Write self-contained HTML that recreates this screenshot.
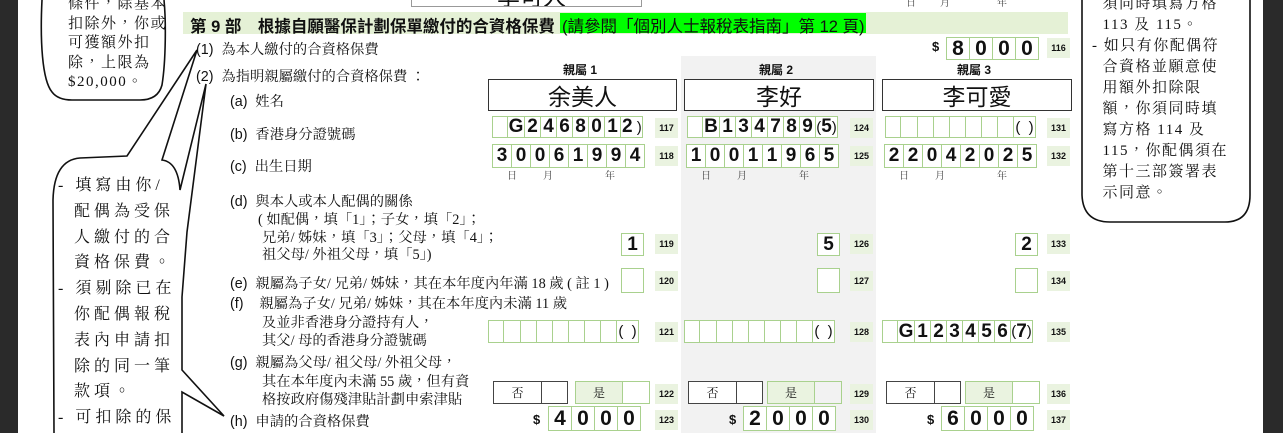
<!DOCTYPE html>
<html><head><meta charset="utf-8"><style>
*{margin:0;padding:0;box-sizing:border-box}
html,body{width:1283px;height:433px;overflow:hidden}
body{background:#fff;position:relative;font-family:"Liberation Sans","Noto Sans CJK TC",sans-serif;color:#111}
.a{position:absolute;white-space:nowrap}
.s{font-family:"Liberation Serif","Noto Serif CJK TC",serif}
.lab{font-size:14.3px}
.row{position:absolute;display:flex;height:23px}
.c{border:1px solid #a9d18e;margin-right:-1px;height:100%;display:flex;align-items:center;justify-content:center;font-weight:bold;font-size:19px;background:#fff}
.n{position:absolute;width:23px;height:20px;background:#eaf3e0;font-size:9px;font-weight:bold;display:flex;align-items:center;justify-content:center}
.nm{position:absolute;height:32px;border:1.5px solid #333;background:#fff;font-size:23px;display:flex;align-items:center;justify-content:center;font-family:"Liberation Sans","Noto Sans CJK TC",sans-serif}
.hd{position:absolute;font-size:12px;font-weight:bold}
.dm{position:absolute;font-size:10px;color:#444;font-family:"Liberation Serif","Noto Serif CJK TC",serif}
.yn{position:absolute;height:23px;display:flex;font-size:12px;font-family:"Liberation Serif","Noto Serif CJK TC",serif}
.yn div{height:100%;display:flex;align-items:center;justify-content:center}
.cb{font-family:"Liberation Serif","Noto Serif CJK TC",serif;font-size:15px;line-height:1}
.clip{position:absolute;left:0;top:0;width:1283px;height:433px;overflow:hidden}
</style></head><body>
<div class="clip">
<div class="a" style="left:0;top:0;width:18px;height:433px;background:#2a2a2a"></div>
<div class="a" style="left:1263px;top:0;width:20px;height:433px;background:#2a2a2a"></div>
<div class="a" style="left:681px;top:56px;width:195px;height:377px;background:#f2f2f2"></div>

<div class="a" style="left:411px;top:0;width:231px;height:7px;border:1.5px solid #999;border-top:none;background:#fff;overflow:hidden"><span style="position:absolute;left:85px;top:-22px;font-size:23px">李可人</span></div>
<div class="a" style="left:0;top:0;width:1283px;height:10px;overflow:hidden">
<div class="dm" style="left:906px;top:-6px">日</div><div class="dm" style="left:940px;top:-6px">月</div><div class="dm" style="left:997px;top:-6px">年</div>
</div>

<div class="a" style="left:183px;top:12px;width:885px;height:22px;background:#e5f1d6"></div>
<div class="a" style="left:190px;top:13px;font-size:16.5px;font-weight:bold">第 9 部　根據自願醫保計劃保單繳付的合資格保費</div>
<div class="a" style="left:560px;top:13px;width:306px;height:20px;background:#00ff00"></div>
<div class="a" style="left:562px;top:13px;font-size:16.5px">(請參閱「個別人士報稅表指南」第 12 頁)</div>

<div class="a lab" style="left:196px;top:39px">(1)&nbsp;&nbsp;<span class="s">為本人繳付的合資格保費</span></div>
<div class="a lab" style="left:196px;top:66px">(2)&nbsp;&nbsp;<span class="s">為指明親屬繳付的合資格保費 ：</span></div>
<div class="a lab" style="left:230px;top:91px">(a)&nbsp;&nbsp;<span class="s">姓名</span></div>
<div class="a lab" style="left:230px;top:124px">(b)&nbsp;&nbsp;<span class="s">香港身分證號碼</span></div>
<div class="a lab" style="left:230px;top:156px">(c)&nbsp;&nbsp;<span class="s">出生日期</span></div>
<div class="a lab" style="left:230px;top:191px">(d)&nbsp;&nbsp;<span class="s">與本人或本人配偶的關係</span></div>
<div class="a lab s" style="left:258px;top:209px">( 如配偶，填「1」；子女，填「2」；</div>
<div class="a lab s" style="left:262px;top:227px">兄弟/ 姊妹，填「3」；父母，填「4」；</div>
<div class="a lab s" style="left:262px;top:244px">祖父母/ 外祖父母，填「5」)</div>
<div class="a lab" style="left:230px;top:273px">(e)&nbsp;&nbsp;<span class="s">親屬為子女/ 兄弟/ 姊妹，其在本年度內年滿 18 歲 ( 註 1 )</span></div>
<div class="a lab" style="left:230px;top:293px">(f)&nbsp;&nbsp;&nbsp;&nbsp;<span class="s">親屬為子女/ 兄弟/ 姊妹，其在本年度內未滿 11 歲</span></div>
<div class="a lab s" style="left:262px;top:312px">及並非香港身分證持有人，</div>
<div class="a lab s" style="left:262px;top:330px">其父/ 母的香港身分證號碼</div>
<div class="a lab" style="left:230px;top:352px">(g)&nbsp;&nbsp;<span class="s">親屬為父母/ 祖父母/ 外祖父母，</span></div>
<div class="a lab s" style="left:262px;top:371px">其在本年度內未滿 55 歲，但有資</div>
<div class="a lab s" style="left:262px;top:389px">格按政府傷殘津貼計劃申索津貼</div>
<div class="a lab" style="left:230px;top:411px">(h)&nbsp;&nbsp;<span class="s">申請的合資格保費</span></div>

<div class="a" style="left:932px;top:39px;font-size:13px;font-weight:bold">$</div>
<div class="row" style="left:946px;top:37px"><div class="c" style="width:24px;font-size:21px">8</div><div class="c" style="width:24px;font-size:21px">0</div><div class="c" style="width:24px;font-size:21px">0</div><div class="c" style="width:24px;font-size:21px">0</div></div>
<div class="n" style="left:1047px;top:38px">116</div>

<div class="hd" style="left:563px;top:61px">親屬 1</div>
<div class="hd" style="left:759px;top:61px">親屬 2</div>
<div class="hd" style="left:957px;top:61px">親屬 3</div>
<div class="nm" style="left:488px;top:79px;width:189px">余美人</div>
<div class="nm" style="left:684px;top:79px;width:190px">李好</div>
<div class="nm" style="left:882px;top:79px;width:190px">李可愛</div>

<div class="row" style="left:492px;top:116px;height:22px"><div class="c" style="width:16px"></div><div class="c" style="width:18px">G</div><div class="c" style="width:17px">2</div><div class="c" style="width:17px">4</div><div class="c" style="width:17px">6</div><div class="c" style="width:17px">8</div><div class="c" style="width:17px">0</div><div class="c" style="width:17px">1</div><div class="c" style="width:23px;justify-content:flex-start;padding-left:1px">2<span style="font-weight:normal;font-size:15px">&nbsp;)</span></div></div>
<div class="n" style="left:655px;top:118px">117</div>
<div class="row" style="left:687px;top:116px;height:22px"><div class="c" style="width:16px"></div><div class="c" style="width:18px">B</div><div class="c" style="width:17px">1</div><div class="c" style="width:17px">3</div><div class="c" style="width:17px">4</div><div class="c" style="width:17px">7</div><div class="c" style="width:17px">8</div><div class="c" style="width:17px">9</div><div class="c" style="width:23px"><span style="font-weight:normal;font-size:15px">(</span>5<span style="font-weight:normal;font-size:15px">)</span></div></div>
<div class="n" style="left:850px;top:118px">124</div>
<div class="row" style="left:885px;top:116px;height:22px"><div class="c" style="width:16px"></div><div class="c" style="width:18px"></div><div class="c" style="width:17px"></div><div class="c" style="width:17px"></div><div class="c" style="width:17px"></div><div class="c" style="width:17px"></div><div class="c" style="width:17px"></div><div class="c" style="width:17px"></div><div class="c" style="width:23px;font-weight:normal;font-size:15px">(&nbsp;&nbsp;)</div></div>
<div class="n" style="left:1047px;top:118px">131</div>

<div class="row" style="left:492px;top:144px;height:24px"><div class="c" style="width:20px">3</div><div class="c" style="width:20px">0</div><div class="c" style="width:20px">0</div><div class="c" style="width:20px">6</div><div class="c" style="width:20px">1</div><div class="c" style="width:20px">9</div><div class="c" style="width:20px">9</div><div class="c" style="width:20px">4</div></div>
<div class="n" style="left:655px;top:146px">118</div>
<div class="row" style="left:686px;top:144px;height:24px"><div class="c" style="width:20px">1</div><div class="c" style="width:20px">0</div><div class="c" style="width:20px">0</div><div class="c" style="width:20px">1</div><div class="c" style="width:20px">1</div><div class="c" style="width:20px">9</div><div class="c" style="width:20px">6</div><div class="c" style="width:20px">5</div></div>
<div class="n" style="left:850px;top:146px">125</div>
<div class="row" style="left:884px;top:144px;height:24px"><div class="c" style="width:20px">2</div><div class="c" style="width:20px">2</div><div class="c" style="width:20px">0</div><div class="c" style="width:20px">4</div><div class="c" style="width:20px">2</div><div class="c" style="width:20px">0</div><div class="c" style="width:20px">2</div><div class="c" style="width:20px">5</div></div>
<div class="n" style="left:1047px;top:146px">132</div>
<div class="dm" style="left:507px;top:167px">日</div><div class="dm" style="left:543px;top:167px">月</div><div class="dm" style="left:605px;top:167px">年</div>
<div class="dm" style="left:701px;top:167px">日</div><div class="dm" style="left:737px;top:167px">月</div><div class="dm" style="left:799px;top:167px">年</div>
<div class="dm" style="left:899px;top:167px">日</div><div class="dm" style="left:935px;top:167px">月</div><div class="dm" style="left:997px;top:167px">年</div>

<div class="row" style="left:621px;top:233px"><div class="c" style="width:23px">1</div></div><div class="n" style="left:655px;top:234px">119</div>
<div class="row" style="left:817px;top:233px"><div class="c" style="width:23px">5</div></div><div class="n" style="left:850px;top:234px">126</div>
<div class="row" style="left:1015px;top:233px"><div class="c" style="width:23px">2</div></div><div class="n" style="left:1047px;top:234px">133</div>
<div class="row" style="left:621px;top:268px;height:25px"><div class="c" style="width:23px"></div></div><div class="n" style="left:655px;top:271px">120</div>
<div class="row" style="left:817px;top:268px;height:25px"><div class="c" style="width:23px"></div></div><div class="n" style="left:850px;top:271px">127</div>
<div class="row" style="left:1015px;top:268px;height:25px"><div class="c" style="width:23px"></div></div><div class="n" style="left:1047px;top:271px">134</div>
<div class="row" style="left:488px;top:320px;height:23px"><div class="c" style="width:16px"></div><div class="c" style="width:18px"></div><div class="c" style="width:17px"></div><div class="c" style="width:17px"></div><div class="c" style="width:17px"></div><div class="c" style="width:17px"></div><div class="c" style="width:17px"></div><div class="c" style="width:17px"></div><div class="c" style="width:23px;font-weight:normal;font-size:15px">(&nbsp;&nbsp;)</div></div>
<div class="n" style="left:655px;top:322px">121</div>
<div class="row" style="left:684px;top:320px;height:23px"><div class="c" style="width:16px"></div><div class="c" style="width:18px"></div><div class="c" style="width:17px"></div><div class="c" style="width:17px"></div><div class="c" style="width:17px"></div><div class="c" style="width:17px"></div><div class="c" style="width:17px"></div><div class="c" style="width:17px"></div><div class="c" style="width:23px;font-weight:normal;font-size:15px">(&nbsp;&nbsp;)</div></div>
<div class="n" style="left:850px;top:322px">128</div>
<div class="row" style="left:882px;top:320px;height:23px"><div class="c" style="width:16px"></div><div class="c" style="width:18px">G</div><div class="c" style="width:17px">1</div><div class="c" style="width:17px">2</div><div class="c" style="width:17px">3</div><div class="c" style="width:17px">4</div><div class="c" style="width:17px">5</div><div class="c" style="width:17px">6</div><div class="c" style="width:23px"><span style="font-weight:normal;font-size:15px">(</span>7<span style="font-weight:normal;font-size:15px">)</span></div></div>
<div class="n" style="left:1047px;top:322px">135</div>
<div class="yn" style="left:493px;top:381px"><div style="width:49px;border:1px solid #444">否</div><div style="width:26px;border:1px solid #444;border-left:none"></div></div>
<div class="yn" style="left:575px;top:381px"><div style="width:48px;border:1px solid #a9d18e;background:#eaf3e0">是</div><div style="width:27px;border:1px solid #a9d18e;border-left:none"></div></div>
<div class="n" style="left:655px;top:384px">122</div>
<div class="yn" style="left:688px;top:381px"><div style="width:49px;border:1px solid #444;background:#fff">否</div><div style="width:26px;border:1px solid #444;border-left:none;background:#fff"></div></div>
<div class="yn" style="left:767px;top:381px"><div style="width:48px;border:1px solid #a9d18e;background:#eaf3e0">是</div><div style="width:27px;border:1px solid #a9d18e;border-left:none;background:#f2f2f2"></div></div>
<div class="n" style="left:850px;top:384px">129</div>
<div class="yn" style="left:886px;top:381px"><div style="width:49px;border:1px solid #444">否</div><div style="width:26px;border:1px solid #444;border-left:none"></div></div>
<div class="yn" style="left:965px;top:381px"><div style="width:48px;border:1px solid #a9d18e;background:#eaf3e0">是</div><div style="width:27px;border:1px solid #a9d18e;border-left:none"></div></div>
<div class="n" style="left:1047px;top:384px">136</div>
<div class="a" style="left:533px;top:412px;font-size:13px;font-weight:bold">$</div>
<div class="row" style="left:548px;top:406px;height:25px"><div class="c" style="width:24px;font-size:21px">4</div><div class="c" style="width:24px;font-size:21px">0</div><div class="c" style="width:24px;font-size:21px">0</div><div class="c" style="width:24px;font-size:21px">0</div></div>
<div class="n" style="left:655px;top:410px">123</div>
<div class="a" style="left:729px;top:412px;font-size:13px;font-weight:bold">$</div>
<div class="row" style="left:743px;top:406px;height:25px"><div class="c" style="width:24px;font-size:21px">2</div><div class="c" style="width:24px;font-size:21px">0</div><div class="c" style="width:24px;font-size:21px">0</div><div class="c" style="width:24px;font-size:21px">0</div></div>
<div class="n" style="left:850px;top:410px">130</div>
<div class="a" style="left:927px;top:412px;font-size:13px;font-weight:bold">$</div>
<div class="row" style="left:941px;top:406px;height:25px"><div class="c" style="width:24px;font-size:21px">6</div><div class="c" style="width:24px;font-size:21px">0</div><div class="c" style="width:24px;font-size:21px">0</div><div class="c" style="width:24px;font-size:21px">0</div></div>
<div class="n" style="left:1047px;top:410px">137</div>

<svg class="a" style="left:0;top:0" width="1283" height="433">
<g fill="none" stroke="#111" stroke-width="1.6">
<path d="M42,0 C40,40 42,80 52,92 Q58,100 72,100 L140,100 Q158,100 162,85 C166,60 166,20 164,0"/>
<path d="M54,433 L53,200 Q54,160 80,158 L127,156 L197,50 L162,160 Q178,162 180,190 L206,84 L187,232 L182,297 L182,370 L224,416 L182,392 L182,433"/>
<path d="M1082,0 L1082,195 Q1083,222 1110,222 L1225,222 Q1250,222 1250,195 L1250,0"/>
</g>
</svg>
<div class="a" style="left:60px;top:0;width:105px;height:95px;overflow:hidden"><div class="a cb" style="left:8px;top:-5px;line-height:19.5px;letter-spacing:1.5px">條件，除基本<br>扣除外，你或<br>可獲額外扣<br>除，上限為<br>$20,000。</div></div>
<div class="a" style="left:56px;top:160px;width:125px;height:273px;overflow:hidden"><div class="a cb" style="left:2px;top:13px;line-height:25.8px;font-size:16px;letter-spacing:4px">- 填寫由你/<br>&nbsp;&nbsp;配偶為受保<br>&nbsp;&nbsp;人繳付的合<br>&nbsp;&nbsp;資格保費。<br>- 須剔除已在<br>&nbsp;&nbsp;你配偶報稅<br>&nbsp;&nbsp;表內申請扣<br>&nbsp;&nbsp;除的同一筆<br>&nbsp;&nbsp;款項。<br>- 可扣除的保<br>&nbsp;&nbsp;費上限為每</div></div>
<div class="a" style="left:1085px;top:0;width:163px;height:215px;overflow:hidden"><div class="a cb" style="left:7px;top:-6px;line-height:21px;letter-spacing:1.5px">&nbsp;&nbsp;須同時填寫方格<br>&nbsp;&nbsp;113 及 115。<br>- 如只有你配偶符<br>&nbsp;&nbsp;合資格並願意使<br>&nbsp;&nbsp;用額外扣除限<br>&nbsp;&nbsp;額，你須同時填<br>&nbsp;&nbsp;寫方格 114 及<br>&nbsp;&nbsp;115，你配偶須在<br>&nbsp;&nbsp;第十三部簽署表<br>&nbsp;&nbsp;示同意。</div></div>
</div>
</body></html>
